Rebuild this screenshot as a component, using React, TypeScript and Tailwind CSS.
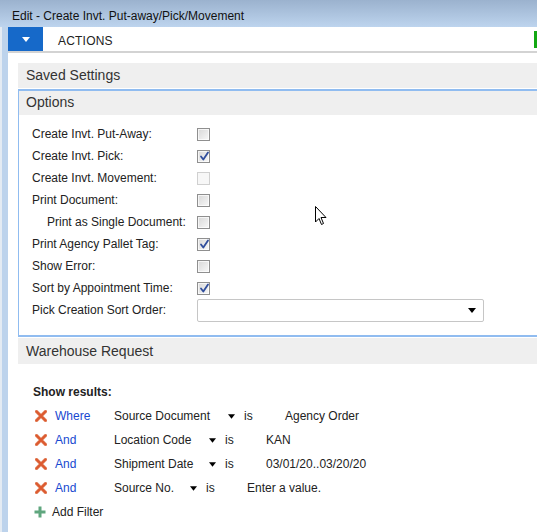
import React from "react";

function Checkbox({ checked, disabled }: { checked?: boolean; disabled?: boolean }) {
  return (
    <div
      className={
        "relative w-[13px] h-[13px] border " +
        (disabled ? "border-[#d0d0d0] bg-[#f7f7f7]" : "border-[#8f8f8f] bg-gradient-to-br from-[#d8d8d8] to-[#f8f8f8]")
      }
    >
      {!disabled && <div className="absolute inset-0 border border-white opacity-70" />}
      {checked && (
        <svg className="absolute left-[1px] top-[0px]" width="11" height="11" viewBox="0 0 11 11">
          <path d="M2 5.5 L4.3 8.5 L9 1.5" fill="none" stroke="#2f4d9c" strokeWidth="1.8" strokeLinecap="round" strokeLinejoin="round" />
        </svg>
      )}
    </div>
  );
}

function Tri({ color = "#000", w = 8 }: { color?: string; w?: number }) {
  return (
    <svg width={w} height="5" viewBox="0 0 8 5">
      <path d="M0 0 H8 L4 5 Z" fill={color} />
    </svg>
  );
}

function XIcon() {
  return (
    <svg width="12" height="12" viewBox="0 0 12 12">
      <path d="M1.5 1.5 L10.5 10.5 M10.5 1.5 L1.5 10.5" stroke="#e8a080" strokeWidth="3.4" strokeLinecap="round" />
      <path d="M1.5 1.5 L10.5 10.5 M10.5 1.5 L1.5 10.5" stroke="#dc5a30" strokeWidth="2.4" strokeLinecap="round" />
    </svg>
  );
}

function PlusIcon() {
  return (
    <svg width="12" height="12" viewBox="0 0 12 12">
      <path d="M6 0.5 V11.5 M0.5 6 H11.5" stroke="#5fa67e" strokeWidth="3" />
    </svg>
  );
}

const optionRows: { label: string; indent?: boolean; checked?: boolean; disabled?: boolean }[] = [
  { label: "Create Invt. Put-Away:" },
  { label: "Create Invt. Pick:", checked: true },
  { label: "Create Invt. Movement:", disabled: true },
  { label: "Print Document:" },
  { label: "Print as Single Document:", indent: true },
  { label: "Print Agency Pallet Tag:", checked: true },
  { label: "Show Error:" },
  { label: "Sort by Appointment Time:", checked: true },
];

const filters = [
  { op: "Where", field: "Source Document", fw: "w-[114px]", value: "Agency Order" },
  { op: "And", field: "Location Code", fw: "w-[95px]", value: "KAN" },
  { op: "And", field: "Shipment Date", fw: "w-[95px]", value: "03/01/20..03/20/20" },
  { op: "And", field: "Source No.", fw: "w-[76px]", value: "Enter a value." },
];

export default function App() {
  return (
    <div className="relative w-[537px] h-[532px] overflow-hidden bg-white text-[#1e1e1e] font-['Liberation_Sans',Arial,sans-serif]">
      {/* title bar */}
      <div className="h-[27px] bg-gradient-to-b from-[#9bb2ce] to-[#bdd4ee] flex items-center pl-[12px] pt-[4px] text-[12px] text-[#111]">
        Edit - Create Invt. Put-away/Pick/Movement
      </div>
      <div className="flex h-[505px]">
        {/* left frame */}
        <div className="w-[8px] flex">
          <div className="w-[2px] bg-[#e4ebf3]" />
          <div className="flex-1 bg-[#bdd3ec]" />
        </div>
        <div className="flex-1 flex flex-col">
          {/* actions bar */}
          <div className="h-[24px] flex items-center border-b-2 border-[#d3d3d3] box-content">
            <div className="w-[35px] h-full bg-[#1669c9] flex items-center justify-center">
              <Tri color="#ffffff" w={8} />
            </div>
            <div className="ml-[15px] pt-[3px] text-[12px] text-[#222] tracking-[0.2px]">ACTIONS</div>
            <div className="ml-auto w-[3px] h-[17px] bg-[#13a813]" />
          </div>
          <div className="pl-[10px] pt-[10px]">
            <div className="h-[25px] bg-[#efefef] flex items-center pl-[8px] text-[14px] text-[#333]">Saved Settings</div>
            <div className="mt-[1px] border-l border-t-2 border-b-2 border-[#90bcf0]">
              <div className="h-[24px] bg-[#efefef] flex items-center pl-[7px] pb-[2px] text-[14px] text-[#333]">Options</div>
              <div className="pl-[13px] pt-[8px] pb-[14px] text-[12px] text-[#222]">
                {optionRows.map((r) => (
                  <div key={r.label} className="h-[22px] flex items-center">
                    <div className={"w-[165px] " + (r.indent ? "pl-[15px]" : "")}>{r.label}</div>
                    <Checkbox checked={r.checked} disabled={r.disabled} />
                  </div>
                ))}
                <div className="h-[22px] flex items-center">
                  <div className="w-[165px]">Pick Creation Sort Order:</div>
                  <div className="w-[287px] h-[23px] border border-[#c6c6c6] rounded-[2px] flex items-center justify-end pr-[7px]">
                    <Tri w={8} />
                  </div>
                </div>
              </div>
            </div>
            <div className="mt-[1px] h-[26px] bg-[#efefef] flex items-center pl-[8px] text-[14px] text-[#333]">Warehouse Request</div>
            <div className="pl-[15px] pt-[20px] text-[12px] text-[#222]">
              <div className="h-[16px] flex items-center font-bold">Show results:</div>
              <div className="mt-[4px]">
                {filters.map((f, i) => (
                  <div key={i} className="h-[24px] flex items-center">
                    <div className="w-[22px] pl-[2px]">
                      <XIcon />
                    </div>
                    <div className="w-[59px] text-[#1848d0]">{f.op}</div>
                    <div className={f.fw + " whitespace-nowrap"}>{f.field}</div>
                    <div className="w-[16px] flex items-center"><Tri w={7} /></div>
                    <div className="w-[41px]">is</div>
                    <div>{f.value}</div>
                  </div>
                ))}
                <div className="h-[24px] flex items-center">
                  <div className="w-[19px] pl-[1px]">
                    <PlusIcon />
                  </div>
                  <div>Add Filter</div>
                </div>
              </div>
            </div>
          </div>
        </div>
      </div>
      {/* mouse cursor */}
      <svg className="absolute left-[315px] top-[206px]" width="13" height="20" viewBox="0 0 13 20">
        <path d="M0.5 0.5 L0.5 16 L4 12.5 L6.5 18.5 L8.5 17.5 L6 11.5 L11 11.5 Z" fill="#fff" stroke="#000" strokeWidth="1" strokeLinejoin="miter" />
      </svg>
    </div>
  );
}
